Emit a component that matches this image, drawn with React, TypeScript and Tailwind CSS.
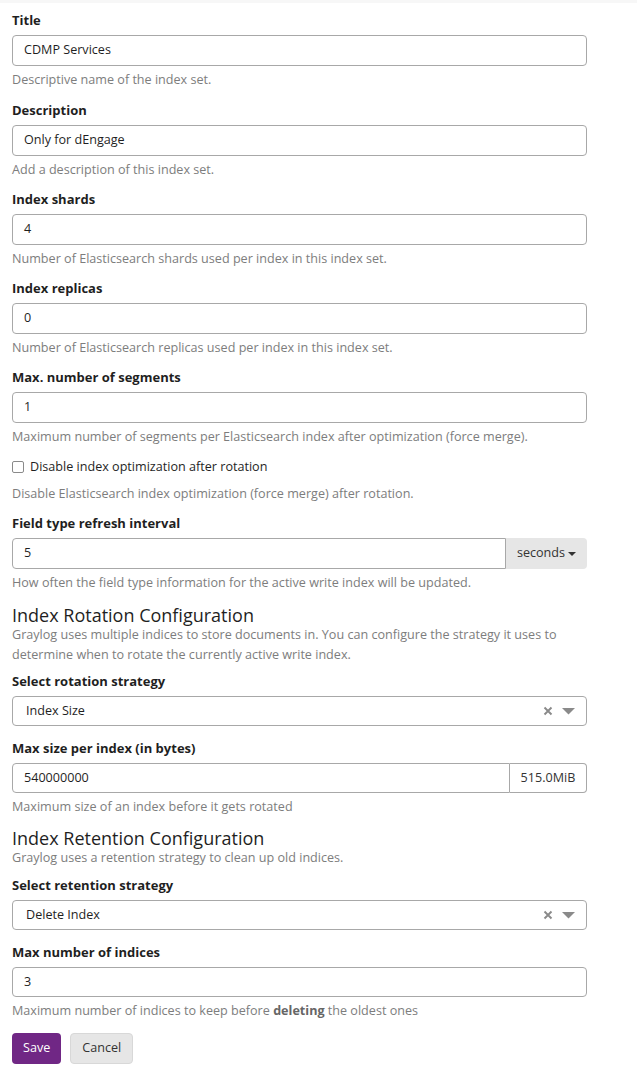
import React from "react";

const font = { fontFamily: '"Open Sans", "Noto Sans", sans-serif' };

function Label({ children }: { children: React.ReactNode }) {
  return (
    <label className="block text-[13px] font-bold leading-5 text-[#1f1f1f] mb-[5px]">
      {children}
    </label>
  );
}

function Help({ children }: { children: React.ReactNode }) {
  return (
    <p className="mt-[5px] text-[12.6px] leading-[18px] text-[#7d7d7d]">{children}</p>
  );
}

function TextInput({ value }: { value: string }) {
  return (
    <div className="h-[31px] flex items-center px-[11px] border border-[#a8a8a8] rounded-[4px] bg-white text-[12.6px] text-[#1f1f1f]">
      {value}
    </div>
  );
}

function Field({
  label,
  value,
  help,
  className = "mb-[10px]",
}: {
  label: string;
  value: string;
  help: string;
  className?: string;
}) {
  return (
    <div className={className}>
      <Label>{label}</Label>
      <TextInput value={value} />
      <Help>{help}</Help>
    </div>
  );
}

function SelectBox({ value }: { value: string }) {
  return (
    <div className="h-[30px] flex items-center pl-[13px] pr-[11px] border border-[#a8a8a8] rounded-[4px] bg-white text-[12.6px] text-[#1f1f1f]">
      <span className="flex-1">{value}</span>
      <svg width="10" height="10" viewBox="0 0 10 10" className="mr-[9px]">
        <path d="M1.5 1.5 L8.5 8.5 M8.5 1.5 L1.5 8.5" stroke="#8a8a8a" strokeWidth="1.9" />
      </svg>
      <svg width="13" height="7" viewBox="0 0 13 7">
        <path d="M0 0 H13 L6.5 6.5 Z" fill="#8a8a8a" />
      </svg>
    </div>
  );
}

function SectionHead({
  title,
  text,
  className,
}: {
  title: string;
  text: string;
  className: string;
}) {
  return (
    <div className={className}>
      <h2 className="text-[18px] leading-5 font-normal text-[#1f1f1f]">{title}</h2>
      <p className="text-[12.6px] leading-5 text-[#7d7d7d]">{text}</p>
    </div>
  );
}

export default function App() {
  return (
    <div style={font} className="min-h-[1065px] bg-white">
      <div className="h-[3px] bg-[#f7f7f7]" />
      <div className="pl-3 pt-[7px] w-[587px]">
        <Field
          label="Title"
          value="CDMP Services"
          help="Descriptive name of the index set."
          className="mb-[11px]"
        />
        <Field label="Description" value="Only for dEngage" help="Add a description of this index set." />
        <Field
          label="Index shards"
          value="4"
          help="Number of Elasticsearch shards used per index in this index set."
        />
        <Field
          label="Index replicas"
          value="0"
          help="Number of Elasticsearch replicas used per index in this index set."
        />
        <Field
          label="Max. number of segments"
          value="1"
          help="Maximum number of segments per Elasticsearch index after optimization (force merge)."
          className="mb-[11px]"
        />

        <div className="mb-[10px]">
          <label className="flex items-center h-5 text-[12.6px] text-[#1f1f1f]">
            <span className="w-[12px] h-[12px] border border-[#8a8a8a] rounded-[2px] bg-white mr-[6px]" />
            Disable index optimization after rotation
          </label>
          <p className="mt-[8px] text-[12.6px] leading-[18px] text-[#7d7d7d]">
            Disable Elasticsearch index optimization (force merge) after rotation.
          </p>
        </div>

        <div className="mb-[10px]">
          <Label>Field type refresh interval</Label>
          <div className="flex h-[31px]">
            <div className="flex-1 flex items-center px-[11px] border border-[#a8a8a8] rounded-l-[4px] bg-white text-[12.6px] text-[#1f1f1f]">
              5
            </div>
            <div className="w-[81px] flex items-center justify-center gap-[3px] bg-[#e6e6e6] rounded-r-[4px] text-[12.6px] text-[#333]">
              seconds
              <svg width="8" height="4" viewBox="0 0 8 4">
                <path d="M0 0 H8 L4 4 Z" fill="#333" />
              </svg>
            </div>
          </div>
          <Help>How often the field type information for the active write index will be updated.</Help>
        </div>

        <SectionHead
          className="mt-[13px] mb-[6px]"
          title="Index Rotation Configuration"
          text="Graylog uses multiple indices to store documents in. You can configure the strategy it uses to determine when to rotate the currently active write index."
        />

        <div className="mb-[12px]">
          <Label>Select rotation strategy</Label>
          <SelectBox value="Index Size" />
        </div>

        <div className="mb-[10px]">
          <Label>Max size per index (in bytes)</Label>
          <div className="flex h-[30px]">
            <div className="flex-1 flex items-center px-[11px] border border-[#a8a8a8] rounded-l-[4px] bg-white text-[12.6px] text-[#1f1f1f]">
              540000000
            </div>
            <div className="w-[77px] flex items-center justify-center border border-l-0 border-[#a8a8a8] rounded-r-[4px] bg-white text-[12.6px] text-[#333]">
              515.0MiB
            </div>
          </div>
          <Help>Maximum size of an index before it gets rotated</Help>
        </div>

        <SectionHead
          className="mt-[12px] mb-[7px]"
          title="Index Retention Configuration"
          text="Graylog uses a retention strategy to clean up old indices."
        />

        <div className="mb-[12px]">
          <Label>Select retention strategy</Label>
          <SelectBox value="Delete Index" />
        </div>

        <div className="mb-[13px]">
          <Label>Max number of indices</Label>
          <div className="h-[30px] flex items-center px-[11px] border border-[#a8a8a8] rounded-[4px] bg-white text-[12.6px] text-[#1f1f1f]">
            3
          </div>
          <Help>
            Maximum number of indices to keep before <b className="font-bold text-[#666]">deleting</b> the oldest ones
          </Help>
        </div>

        <div className="flex gap-[9px]">
          <button className="h-[31px] px-[11px] rounded-[4px] bg-[#702785] text-white text-[12.6px]">Save</button>
          <button className="h-[31px] px-[11px] rounded-[4px] bg-[#e6e6e6] border border-[#d8d8d8] text-[#333] text-[12.6px]">
            Cancel
          </button>
        </div>
      </div>
    </div>
  );
}
